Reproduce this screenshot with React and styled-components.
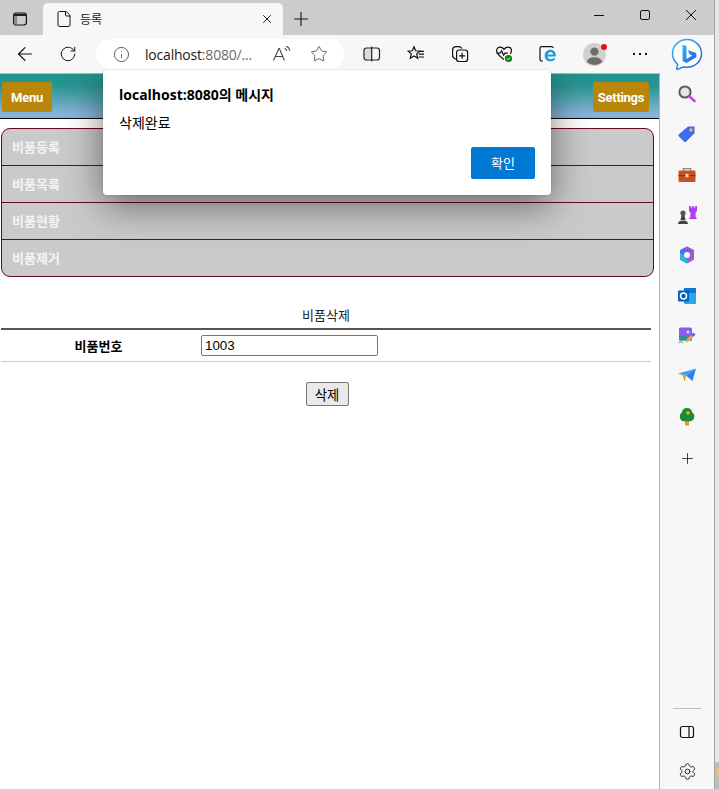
import styled, { createGlobalStyle } from 'styled-components';
import { ArrowLeft, RotateCw, Info, Star, Plus, X, Settings as Gear, File } from 'lucide-react';

const GlobalStyle = createGlobalStyle`
  html, body {
    margin: 0;
    padding: 0;
    background: #fff;
  }
  * {
    box-sizing: border-box;
  }
`;

const UI_FONT = `"Open Sans", "Noto Sans CJK KR", sans-serif`;
const PAGE_FONT = `"Liberation Sans", "Noto Sans CJK KR", sans-serif`;

const menus = ['비품등록', '비품목록', '비품현황', '비품제거'];

function App() {
  return (
    <Screen>
      <GlobalStyle />
      <Browser>
        <TitleBar>
          <TabToggle>
            <svg width="16" height="16" viewBox="0 0 16 16" fill="none" stroke="#111" strokeWidth="1.2">
              <rect x="1.6" y="2" width="12.8" height="12" rx="2.4" />
              <path d="M2.2 2.8h11.6v2.2H2.2z" fill="#222" stroke="none" />
              <path d="M2.2 5h3v8.400h-3z" fill="#8a8a8a" stroke="none" />
            </svg>
          </TabToggle>
          <Tab>
            <File size={18} strokeWidth={1.3} color="#111" />
            <TabTitle>등록</TabTitle>
            <X size={14} strokeWidth={1.6} color="#111" />
          </Tab>
          <NewTab>
            <Plus size={22} strokeWidth={1.2} color="#111" />
          </NewTab>
          <WindowControls>
            <svg width="10" height="10" viewBox="0 0 10 10" stroke="#111" strokeWidth="1">
              <path d="M0 5.500h10" />
            </svg>
            <svg width="10" height="10" viewBox="0 0 10 10" fill="none" stroke="#111" strokeWidth="1">
              <rect x="0.500" y="0.500" width="9" height="9" rx="1.500" />
            </svg>
            <svg width="10" height="10" viewBox="0 0 10 10" stroke="#111" strokeWidth="1">
              <path d="M0 0l10 10M10 0L0 10" />
            </svg>
          </WindowControls>
        </TitleBar>
        <ToolBar>
          <NavIcons>
            <ArrowLeft size={22} strokeWidth={1.3} color="#111" />
            <RotateCw size={18} strokeWidth={1.3} color="#111" />
          </NavIcons>
          <AddressBar>
            <Info size={17} strokeWidth={1.2} color="#444" />
            <Url>
              localhost<UrlRest>:8080/...</UrlRest>
            </Url>
            <ReadAloud>
              <svg width="20" height="18" viewBox="0 0 20 18" fill="none" stroke="#444" strokeWidth="1.1">
                <path d="M1.500 15.500L6.800 3.500h.6l5 12M3.400 11.500h7.600" />
                <path d="M12.600 3.200c1.300.5 2 1.400 2.300 2.800M14.300 1.200c2 .7 3.200 2.200 3.600 4.400" />
              </svg>
            </ReadAloud>
            <Star size={18} strokeWidth={1.1} color="#444" />
          </AddressBar>
          <ToolIcons>
            <ToolCell>
              <svg width="18" height="16" viewBox="0 0 18 16" fill="none" stroke="#222" strokeWidth="1.2">
                <path d="M1.600 2.600h6.600v10.800H1.600" fill="#dcdcdc" stroke="none" />
                <rect x="1" y="2" width="15.500" height="12" rx="2.500" />
                <path d="M8.700 0.500v15" />
              </svg>
            </ToolCell>
            <ToolCell>
              <svg width="18" height="18" viewBox="0 0 18 18" fill="none" stroke="#111" strokeWidth="1.2">
                <path d="M7 1.800l1.700 4 4.100.4-3.100 2.700 1 4.300L7 10.900l-3.700 2.300 1-4.300L1.200 6.200l4.100-.4z" />
                <path d="M12.500 6.400h4.500M11.700 9.200h5.300M11.700 12h5.300" />
              </svg>
            </ToolCell>
            <ToolCell>
              <svg width="18" height="18" viewBox="0 0 18 18" fill="none" stroke="#111" strokeWidth="1.2">
                <path d="M5 14.200c-2-.6-3.400-1.600-3.400-3.600V5.200c0-2 1.600-3.600 3.600-3.600h2.600c1.400 0 2.400.8 3 2" />
                <rect x="5.600" y="5" width="11" height="11.500" rx="2.600" fill="#f7f7f7" />
                <path d="M11.100 7.800v6M8.100 10.800h6" />
              </svg>
            </ToolCell>
            <ToolCell>
              <svg width="18" height="18" viewBox="0 0 18 18" fill="none">
                <path d="M9 14.500C5 11.500 1.600 9.200 1.600 5.800c0-2.200 1.600-3.600 3.500-3.600 1.600 0 3 .9 3.900 2.100.9-1.200 2.300-2.100 3.900-2.100 1.900 0 3.500 1.400 3.500 3.600 0 1.100-.4 2.100-1 3" stroke="#111" strokeWidth="1.200" />
                <path d="M1.500 8.200h3.600l1.500-2.400 2 4.400 1.400-2h2.800" stroke="#111" strokeWidth="1.200" />
                <circle cx="13.500" cy="13.500" r="3.600" fill="#107c10" />
                <path d="M11.800 13.600l1.200 1.200 2.200-2.300" stroke="#fff" strokeWidth="1" />
              </svg>
            </ToolCell>
            <ToolCell>
              <svg width="18" height="18" viewBox="0 0 18 18" fill="none">
                <path d="M4 16H2.800C1.800 16 1 15.200 1 14.200V3.400C1 2.400 1.800 1.600 2.800 1.600h9.800c.8 0 1.500.5 1.700 1.200" stroke="#111" strokeWidth="1.200" />
                <path d="M16.800 11.400H8.600c.1 1.700 1.400 2.800 3.200 2.800 1.500 0 2.800-.5 4-1.400v2.300c-1.300.8-2.700 1.200-4.400 1.200-3.400 0-5.700-2.300-5.700-5.600 0-3.400 2.400-6 5.700-6 3.100 0 5.400 2.200 5.400 5.600v1.100zM14 9.400c0-1.400-.9-2.400-2.400-2.400-1.400 0-2.600 1-2.900 2.400z" fill="#1e9be0" />
              </svg>
            </ToolCell>
            <ToolCell $width={48}>
              <Profile>
                <svg width="23" height="23" viewBox="0 0 23 23">
                  <circle cx="11.500" cy="11.500" r="11.500" fill="#d2d0ce" />
                  <circle cx="11.500" cy="8.600" r="4.200" fill="#6f6d6b" />
                  <path d="M3.800 19c.8-3.400 4-4.800 7.700-4.800s6.900 1.400 7.700 4.800a11.400 11.400 0 0 1-15.400 0z" fill="#6f6d6b" />
                </svg>
                <ProfileDot />
              </Profile>
            </ToolCell>
            <ToolCell>
              <svg width="14" height="4" viewBox="0 0 14 4" fill="#111">
                <rect x="0" y="1" width="2" height="2" />
                <rect x="6" y="1" width="2" height="2" />
                <rect x="12" y="1" width="2" height="2" />
              </svg>
            </ToolCell>
          </ToolIcons>
          <BingButton>
            <svg width="32" height="32" viewBox="0 0 32 32" fill="none">
              <defs>
                <linearGradient id="bingB" x1="0" y1="0" x2="1" y2="1">
                  <stop offset="0" stopColor="#37bdf2" />
                  <stop offset="1" stopColor="#1a5ce0" />
                </linearGradient>
              </defs>
              <path d="M16 1.500C8 1.500 1.500 7.800 1.500 15.600c0 4.400 2 8.200 5.200 10.800l-1 4c-.2.800.4 1.100 1 .8L13 28.900c1 .2 2 .3 3 .3 8 0 14.500-6 14.500-13.700C30.500 7.800 24 1.500 16 1.500z" fill="#fff" stroke="url(#bingB)" strokeWidth="1.500" />
              <path d="M11.500 6.500l4 1.400v13l5.600-3.300-2.700-1.300-1.700-4.300 8.600 3v4.300l-9.900 5.800-3.900-2.200z" fill="url(#bingB)" />
            </svg>
          </BingButton>
        </ToolBar>
        <Body>
          <Page>
            <Header>
              <HeaderButton $width={50}>Menu</HeaderButton>
              <HeaderButton $width={56}>Settings</HeaderButton>
            </Header>
            <MenuList>
              {menus.map((m) => (
                <MenuItem key={m}>{m}</MenuItem>
              ))}
            </MenuList>
            <FormTitle>비품삭제</FormTitle>
            <FormRow>
              <FormLabel>비품번호</FormLabel>
              <FormValue>
                <TextInput defaultValue="1003" />
              </FormValue>
            </FormRow>
            <FormActions>
              <DeleteButton>삭제</DeleteButton>
            </FormActions>
            <AlertShadow />
          </Page>
          <SideBar>
            <SideTop>
              <SideIcon>
                <svg width="20" height="20" viewBox="0 0 20 20" fill="none">
                  <circle cx="8" cy="8" r="5.600" fill="#dfe6ee" stroke="#5a5a5a" strokeWidth="2" />
                  <path d="M12.500 12.500l5 4.500" stroke="#c548e8" strokeWidth="2.600" strokeLinecap="round" />
                </svg>
              </SideIcon>
              <SideIcon>
                <svg width="20" height="20" viewBox="0 0 20 20">
                  <path d="M11 2.500h6.500v6.800l-8.600 8.400a1.200 1.200 0 0 1-1.700 0L1.700 12.200a1.200 1.200 0 0 1 0-1.700z" fill="#3f6bf0" />
                  <circle cx="14" cy="6" r="1.700" fill="#f5c518" />
                </svg>
              </SideIcon>
              <SideIcon>
                <svg width="20" height="20" viewBox="0 0 20 20">
                  <path d="M6.500 6V3.600h7V6" fill="none" stroke="#8a8a8a" strokeWidth="1.400" />
                  <rect x="1.500" y="5.500" width="17" height="11.500" rx="1.200" fill="#c8501e" />
                  <rect x="1.500" y="10" width="17" height="1.200" fill="#8f3410" />
                  <rect x="8.500" y="8.800" width="3" height="3.400" fill="#e8dcd0" />
                </svg>
              </SideIcon>
              <SideIcon>
                <svg width="20" height="20" viewBox="0 0 20 20">
                  <path d="M12 1h1.800v1.500h1.400V1h1.600v1.500h1.400V1H20v5l-1.400 1.600v4L20 14h-8l1.400-2.400v-4L12 6z" fill="#b53cf0" />
                  <circle cx="6" cy="8" r="2.600" fill="#555" />
                  <path d="M4.600 10h2.800l1.200 5H3.400zM1 19c0-2.400 1.500-3.600 5-3.600s5 1.200 5 3.600z" fill="#444" />
                </svg>
              </SideIcon>
              <SideIcon>
                <svg width="20" height="20" viewBox="0 0 20 20">
                  <path d="M10 1.500l7 3.800v9.400L10 18.500z" fill="#9a5fd8" />
                  <path d="M10 1.500L3 5.300v9.400L10 18.500z" fill="#2f7fe0" />
                  <path d="M3 5.300l7-3.800 7 3.800-4 2.700a4 4 0 0 0-6 0z" fill="#7b5fe0" />
                  <path d="M3 14.700V8l4 2.200a4 4 0 0 0 3 3.800v4.500z" fill="#35b0e8" />
                  <circle cx="10" cy="10" r="3" fill="#f7f7f7" />
                </svg>
              </SideIcon>
              <SideIcon>
                <svg width="20" height="20" viewBox="0 0 20 20">
                  <rect x="7" y="2" width="12" height="16" rx="1" fill="#28a8ea" />
                  <rect x="7" y="2" width="12" height="5" fill="#0f78d4" />
                  <rect x="1" y="4.500" width="11" height="11" rx="1" fill="#0a5fb8" />
                  <circle cx="6.500" cy="10" r="3" fill="none" stroke="#fff" strokeWidth="1.500" />
                </svg>
              </SideIcon>
              <SideIcon>
                <svg width="20" height="20" viewBox="0 0 20 20">
                  <rect x="2" y="1.500" width="13" height="13" rx="1.500" fill="#8b5cf0" />
                  <path d="M2 14.500L6.500 8l4 4 2-1.500 2.500 4z" fill="#1f9e6e" />
                  <path d="M11 4.500v3M9.500 6h3" stroke="#fff" strokeWidth="1" />
                  <path d="M8.500 17l1.500-4 6.500-6.500 2 2L12 15z" fill="#f2a93b" />
                  <path d="M14 9l2.500-2.500 2 2L16 11z" fill="#4f6bf0" />
                  <path d="M1.500 17c2-2 3.500-1 5 0" stroke="#1f9e6e" strokeWidth="1" fill="none" />
                </svg>
              </SideIcon>
              <SideIcon>
                <svg width="20" height="20" viewBox="0 0 20 20">
                  <path d="M1 7.500L19 2.500 9 9.500z" fill="#35a8f0" />
                  <path d="M9 9.500L19 2.500 15.500 15z" fill="#2f7df0" />
                  <path d="M9 9.500l-1 6.500-2.500-6.500L1 7.500z" fill="#e8a020" />
                </svg>
              </SideIcon>
              <SideIcon>
                <svg width="20" height="20" viewBox="0 0 20 20">
                  <rect x="8" y="13.500" width="4" height="5" fill="#e89a10" />
                  <path d="M10 1c3 0 5 2 5.300 4.600 1.500.8 2 2.200 2 3.900 0 3-2 4.700-4.300 4.700H6.800c-2.200 0-4-1.700-4-4.700 0-1.700.6-3 2-3.900C5 3 7 1 10 1z" fill="#1f8a3a" />
                  <circle cx="11" cy="6" r="1.800" fill="#f0b020" />
                </svg>
              </SideIcon>
              <SideIcon $top={2}>
                <Plus size={17} strokeWidth={1.1} color="#111" />
              </SideIcon>
            </SideTop>
            <SideBottom>
              <SideRule />
              <SideIcon>
                <svg width="16" height="14" viewBox="0 0 16 14" fill="none" stroke="#111" strokeWidth="1.200">
                  <rect x="1.500" y="1.500" width="13" height="11" rx="2" />
                  <path d="M10 1.500v11" />
                </svg>
              </SideIcon>
              <SideIcon>
                <Gear size={19} strokeWidth={1.1} color="#111" />
              </SideIcon>
            </SideBottom>
          </SideBar>
        </Body>
      </Browser>
      <RightStrip>
        <StripBehind>
          <StripMark />
        </StripBehind>
      </RightStrip>
      <AlertBox>
        <AlertTitle>localhost:8080의 메시지</AlertTitle>
        <AlertText>삭제완료</AlertText>
        <AlertActions>
          <AlertButton>확인</AlertButton>
        </AlertActions>
      </AlertBox>
    </Screen>
  );
}

export default App;

const Screen = styled.div`
  position: relative;
  width: 719px;
  height: 789px;
  overflow: hidden;
  background: #fff;
  font-family: ${PAGE_FONT};
  display: flex;
`;
const Browser = styled.div`
  width: 714px;
  height: 789px;
  display: flex;
  flex-direction: column;
`;
const RightStrip = styled.div`
  flex: 1;
  background: #e6e6e6;
  border-left: 1px solid #a6a6a6;
  display: flex;
  flex-direction: column;
  justify-content: flex-end;
`;
const StripBehind = styled.div`
  height: 27px;
  background: #bdbdbd;
  padding: 6px 0 0 1px;
`;
const StripMark = styled.div`
  width: 3px;
  height: 10px;
  background: #d8c48e;
`;
const TitleBar = styled.div`
  height: 35px;
  background: #cccccc;
  display: flex;
  align-items: flex-end;
  padding-left: 12px;
`;
const TabToggle = styled.div`
  width: 31px;
  height: 32px;
  display: flex;
  align-items: center;
`;
const Tab = styled.div`
  width: 240px;
  height: 32px;
  background: #f7f7f7;
  border-radius: 5px 5px 0 0;
  display: flex;
  align-items: center;
  padding: 0 9px 0 12px;
`;
const TabTitle = styled.div`
  flex: 1;
  margin-left: 7px;
  font: 12px ${UI_FONT};
  color: #1a1a1a;
`;
const NewTab = styled.div`
  width: 36px;
  height: 32px;
  display: flex;
  align-items: center;
  justify-content: center;
`;
const WindowControls = styled.div`
  margin-left: auto;
  height: 35px;
  padding: 0 18px 5px 0;
  display: flex;
  align-items: center;
  gap: 36px;
`;
const ToolBar = styled.div`
  height: 38px;
  background: #f7f7f7;
  display: flex;
  align-items: center;
  padding-left: 14px;
`;
const NavIcons = styled.div`
  width: 82px;
  display: flex;
  align-items: center;
  gap: 23px;
`;
const AddressBar = styled.div`
  width: 248px;
  height: 30px;
  background: #fff;
  border-radius: 15px;
  display: flex;
  align-items: center;
  padding: 0 16px 0 17px;
`;
const Url = styled.div`
  flex: 1;
  margin-left: 15px;
  font: 14px ${UI_FONT};
  color: #1a1a1a;
  letter-spacing: -0.2px;
`;
const UrlRest = styled.span`
  color: #6b6b6b;
`;
const ReadAloud = styled.div`
  width: 38px;
  display: flex;
`;
const ToolIcons = styled.div`
  margin-left: 6px;
  display: flex;
  align-items: center;
`;
const ToolCell = styled.div`
  width: ${(props) => props.$width || 44}px;
  display: flex;
  justify-content: center;
`;
const Profile = styled.div`
  position: relative;
  display: flex;
`;
const ProfileDot = styled.div`
  position: absolute;
  top: 1px;
  right: -1px;
  width: 6px;
  height: 6px;
  border-radius: 50%;
  background: #e81123;
`;
const BingButton = styled.div`
  margin-left: 9px;
  display: flex;
`;
const Body = styled.div`
  flex: 1;
  display: flex;
  min-height: 0;
  overflow: hidden;
`;
const Page = styled.div`
  position: relative;
  width: 659px;
  background: #fff;
  overflow: hidden;
`;
const Header = styled.div`
  height: 46px;
  padding: 8px 10px 0 2px;
  display: flex;
  justify-content: space-between;
  align-items: flex-start;
  background: linear-gradient(#22958f 0%, #26948f 25%, #86b4d9 90%);
  border-bottom: 1px solid #000;
  border-top: 1px solid #b9b9b9;
`;
const HeaderButton = styled.div`
  width: ${(props) => props.$width}px;
  height: 30px;
  background: #b8860b;
  border-radius: 2px;
  color: #fff;
  font: bold 13px/31px Roboto, sans-serif;
  letter-spacing: -0.3px;
  text-align: center;
`;
const MenuList = styled.div`
  width: 653px;
  margin: 9px 0 0 1px;
  border: 1px solid #660a1a;
  border-radius: 9px;
  background: #cacaca;
  overflow: hidden;
`;
const MenuItem = styled.div`
  height: 37px;
  padding-left: 10px;
  color: #f4f4f4;
  font: bold 13px/37px ${PAGE_FONT};
  border-bottom: 1px solid #660a1a;
  &:last-child {
    height: 36px;
    border-bottom: 0;
  }
`;
const FormTitle = styled.div`
  width: 650px;
  margin: 30px 0 0 1px;
  height: 23px;
  text-align: center;
  font-size: 13px;
  line-height: 18px;
  color: #222;
  border-bottom: 2px solid #555;
`;
const FormRow = styled.div`
  width: 650px;
  margin-left: 1px;
  height: 32px;
  display: flex;
  align-items: center;
  border-bottom: 1px solid #ccc;
`;
const FormLabel = styled.div`
  width: 195px;
  text-align: center;
  font-size: 13px;
  font-weight: bold;
  color: #000;
`;
const FormValue = styled.div`
  flex: 1;
  padding-left: 5px;
`;
const TextInput = styled.input`
  display: block;
  width: 177px;
  height: 21px;
  padding: 1px 3px;
  border: 1px solid #767676;
  border-radius: 2px;
  font: 13.33px ${PAGE_FONT};
  color: #000;
  background: #fff;
`;
const FormActions = styled.div`
  width: 652px;
  margin: 20px 0 0 1px;
  display: flex;
  justify-content: center;
`;
const DeleteButton = styled.button`
  width: 43px;
  height: 24px;
  padding: 0;
  border: 1px solid #767676;
  border-radius: 2px;
  background: #e9e9e9;
  font: 13.33px ${PAGE_FONT};
  color: #000;
`;
const SideBar = styled.div`
  flex: 1;
  background: #f7f7f7;
  border-left: 1px solid #b5b5b5;
  display: flex;
  flex-direction: column;
  justify-content: space-between;
  align-items: center;
  padding: 1px 0 0;
`;
const SideTop = styled.div`
  display: flex;
  flex-direction: column;
  align-items: center;
`;
const SideBottom = styled.div`
  display: flex;
  flex-direction: column;
  align-items: center;
  margin-bottom: -3px;
`;
const SideIcon = styled.div`
  flex: none;
  width: 40px;
  height: 40.3px;
  margin-top: ${(props) => props.$top || 0}px;
  display: flex;
  align-items: center;
  justify-content: center;
`;
const SideRule = styled.div`
  width: 28px;
  height: 1px;
  background: #c0c0c0;
  margin-bottom: 2px;
`;
const AlertShadow = styled.div`
  position: absolute;
  left: 103px;
  top: -3px;
  width: 448px;
  height: 125px;
  border-radius: 4px;
  box-shadow: 0 10px 38px rgba(0, 0, 0, 0.5);
`;
const AlertBox = styled.div`
  position: absolute;
  left: 103px;
  top: 70px;
  width: 448px;
  height: 125px;
  padding: 15px 16px 0;
  background: #fff;
  border-radius: 4px;
  box-shadow: 0 0 2px rgba(0, 0, 0, 0.2);
  display: flex;
  flex-direction: column;
`;
const AlertTitle = styled.div`
  font: bold 14px/19px ${UI_FONT};
  color: #000;
`;
const AlertText = styled.div`
  margin-top: 10px;
  font: 14px/18px ${UI_FONT};
  color: #000;
`;
const AlertActions = styled.div`
  margin-top: 15px;
  display: flex;
  justify-content: flex-end;
`;
const AlertButton = styled.div`
  width: 64px;
  height: 32px;
  background: #0078d4;
  border-radius: 2px;
  color: #fff;
  font: 13px/32px ${UI_FONT};
  text-align: center;
`;
